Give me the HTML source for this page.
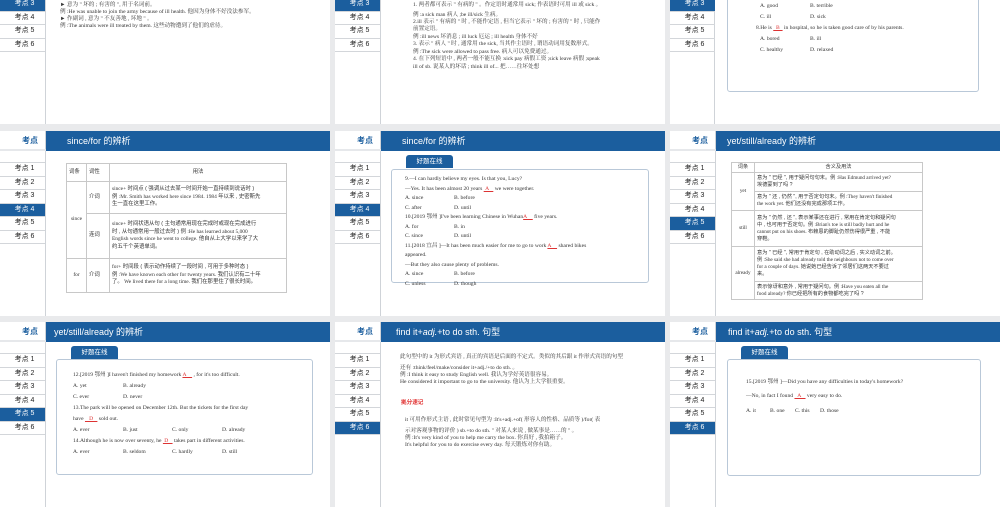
<!DOCTYPE html>
<html><head><meta charset="utf-8">
<style>
*{margin:0;padding:0;box-sizing:border-box}
body{width:1000px;height:503px;background:#e9eaec;position:relative;overflow:hidden;font-family:"Liberation Serif","Noto Serif CJK SC",serif;color:#333}
.s{position:absolute;width:330px;height:185px;background:#fff;overflow:hidden}
.sb{position:absolute;left:0;top:0;width:46px;height:185px;border-right:1px solid #cfd3d8;background:#fff}
.kd{position:absolute;left:0;top:0;width:46px;height:20px;font:bold 8px "Liberation Sans","Noto Sans CJK SC",sans-serif;color:#1b5e9e;text-align:right;padding-right:8px;line-height:20px;border-bottom:2px solid #e6e8eb}
.bar{position:absolute;left:46px;top:0;width:284px;height:20px;background:#1b5e9e;color:#fff;font:9px "Liberation Sans","Noto Sans CJK SC",sans-serif;line-height:20px}
.it{position:absolute;left:0;width:45px;height:13.5px;border-top:1px solid #d3d6da;font:7px "Liberation Sans","Noto Sans CJK SC",sans-serif;color:#222;text-align:center;line-height:12.5px;padding-left:4px}
.it.on{background:#1b5e9e;color:#fff}
.t{position:absolute;font-size:5.6px;white-space:nowrap;line-height:7px}
.r{color:#d33}
.tab{position:absolute;left:71px;top:24px;width:47px;height:13px;background:#1b5e9e;color:#fff;border-radius:3px 3px 0 0;font:6.5px "Liberation Sans","Noto Sans CJK SC",sans-serif;text-align:center;line-height:13px}
.box{position:absolute;border:1px solid #b9c8d8;border-radius:3px;background:#fff}
table{position:absolute;border-collapse:collapse;font-size:5.4px;line-height:7.5px}
td{border:1px solid #c8c8c8;padding:0 2px;vertical-align:middle}
.cj{font-family:"Liberation Sans","Noto Sans CJK SC",sans-serif}
</style></head><body>

<!-- ROW 1 -->
<div class="s" style="left:0;top:-61px">
<div class="sb"></div><div class="kd">考点</div><div class="bar"></div>
<div class="it" style="top:31px">考点 1</div><div class="it" style="top:44.5px">考点 2</div><div class="it on" style="top:58px">考点 3</div><div class="it" style="top:71.5px">考点 4</div><div class="it" style="top:85px">考点 5</div><div class="it" style="top:98.5px">考点 6</div><div class="it" style="top:112px;height:1px"></div>
<div class="t" style="left:60px;top:63px">► 意为 " 坏的 ; 有害的 ", 用于名词前。</div>
<div class="t" style="left:60px;top:70px">例 :He was unable to join the army because of ill health. 他因为身体不好没法参军。</div>
<div class="t" style="left:60px;top:77px">► 作副词 , 意为 " 不友善地 , 坏地 " 。</div>
<div class="t" style="left:60px;top:84px">例 :The animals were ill treated by them. 这些动物遭到了他们的虐待。</div>
</div>

<div class="s" style="left:335px;top:-61px">
<div class="sb"></div><div class="kd">考点</div><div class="bar"></div>
<div class="it" style="top:31px">考点 1</div><div class="it" style="top:44.5px">考点 2</div><div class="it on" style="top:58px">考点 3</div><div class="it" style="top:71.5px">考点 4</div><div class="it" style="top:85px">考点 5</div><div class="it" style="top:98.5px">考点 6</div><div class="it" style="top:112px;height:1px"></div>
<div class="t" style="left:78px;top:63px">1. 两者都可表示 " 有病的 " 。作定语时通常用 sick; 作表语时可用 ill 或 sick 。</div>
<div class="t" style="left:78px;top:73px">例 :a sick man 病人 ;be ill/sick 生病。</div>
<div class="t" style="left:78px;top:80px">2.ill 表示 " 有病的 " 时 , 不能作定语 , 但当它表示 " 坏的 ; 有害的 " 时 , 只能作</div>
<div class="t" style="left:78px;top:87px">前置定语。</div>
<div class="t" style="left:78px;top:95px">例 :ill news 坏消息 ; ill luck 厄运 ; ill health 身体不好</div>
<div class="t" style="left:78px;top:102px">3. 表示 " 病人 " 时 , 通常用 the sick, 当其作主语时 , 谓语动词用复数形式。</div>
<div class="t" style="left:78px;top:110px">例 :The sick were allowed to pass free. 病人可以免费通过。</div>
<div class="t" style="left:78px;top:117px">4. 在下列短语中 , 两者一般不能互换 :sick pay 病假工资 ;sick leave 病假 ;speak</div>
<div class="t" style="left:78px;top:125px">ill of sb. 说某人的坏话 ; think ill of... 把……往坏处想</div>
</div>

<div class="s" style="left:670px;top:-61px">
<div class="sb" style="left:-5px;width:50px"></div><div class="kd">考点</div><div class="bar"></div>
<div class="it" style="top:31px">考点 1</div><div class="it" style="top:44.5px">考点 2</div><div class="it on" style="top:58px">考点 3</div><div class="it" style="top:71.5px">考点 4</div><div class="it" style="top:85px">考点 5</div><div class="it" style="top:98.5px">考点 6</div><div class="it" style="top:112px;height:1px"></div>
<div class="box" style="left:57px;top:30px;width:252px;height:123px"></div>
<div class="t" style="left:90px;top:64px">A. good</div><div class="t" style="left:140px;top:64px">B. terrible</div>
<div class="t" style="left:90px;top:75px">C. ill</div><div class="t" style="left:140px;top:75px">D. sick</div>
<div class="t" style="left:86px;top:86px">8.He is <span class="r" style="text-decoration:underline">&nbsp;&nbsp;B&nbsp;&nbsp;</span> in hospital, so he is taken good care of by his parents.</div>
<div class="t" style="left:90px;top:97px">A. bored</div><div class="t" style="left:140px;top:97px">B. ill</div>
<div class="t" style="left:90px;top:108px">C. healthy</div><div class="t" style="left:140px;top:108px">D. relaxed</div>
</div>

<!-- ROW 2 -->
<div class="s" style="left:0;top:131px">
<div class="sb"></div><div class="kd">考点</div><div class="bar" style="padding-left:21px">since/for 的辨析</div>
<div class="it" style="top:31px">考点 1</div><div class="it" style="top:44.5px">考点 2</div><div class="it" style="top:58px">考点 3</div><div class="it on" style="top:71.5px">考点 4</div><div class="it" style="top:85px">考点 5</div><div class="it" style="top:98.5px">考点 6</div><div class="it" style="top:112px;height:1px"></div>
<table style="left:66px;top:32px;width:221px">
<tr style="height:18px" class="cj"><td style="width:20px">词条</td><td style="width:23px">词性</td><td style="text-align:center">用法</td></tr>
<tr style="height:32px"><td rowspan="2" style="text-align:center">since</td><td class="cj">介词</td><td>since+ <span class="cj">时间点 ( 强调从过去某一时间开始一直持续到说话时 )<br>例</span> :Mr. Smith has worked here since 1984. 1984 <span class="cj">年以来 , 史密斯先<br>生一直在这里工作。</span></td></tr>
<tr style="height:45px"><td class="cj">连词</td><td>since+ <span class="cj">时间状语从句 ( 主句通常用现在完成时或现在完成进行<br>时 , 从句通常用一般过去时 ) 例</span> :He has learned about 5,000<br>English words since he went to college. <span class="cj">他自从上大学以来学了大<br>约五千个英语单词。</span></td></tr>
<tr style="height:34px"><td style="text-align:center">for</td><td class="cj">介词</td><td>for+ <span class="cj">时间段 ( 表示动作持续了一段时间 , 可用于多种时态 )<br>例</span> :We have known each other for twenty years. <span class="cj">我们认识有二十年<br>了。</span> We lived there for a long time. <span class="cj">我们在那里住了很长时间。</span></td></tr>
</table>
</div>

<div class="s" style="left:335px;top:131px">
<div class="sb"></div><div class="kd">考点</div><div class="bar" style="padding-left:21px">since/for 的辨析</div>
<div class="it" style="top:31px">考点 1</div><div class="it" style="top:44.5px">考点 2</div><div class="it" style="top:58px">考点 3</div><div class="it on" style="top:71.5px">考点 4</div><div class="it" style="top:85px">考点 5</div><div class="it" style="top:98.5px">考点 6</div><div class="it" style="top:112px;height:1px"></div>
<div class="tab">好题在线</div>
<div class="box" style="left:56px;top:38px;width:258px;height:114px"></div>
<div class="t" style="left:70px;top:45px">9.—I can hardly believe my eyes. Is that you, Lucy?</div>
<div class="t" style="left:70px;top:54.5px">—Yes. It has been almost 20 years <span class="r" style="text-decoration:underline">&nbsp;A&nbsp;&nbsp;&nbsp;</span> we were together.</div>
<div class="t" style="left:70px;top:64px">A. since</div><div class="t" style="left:119px;top:64px">B. before</div>
<div class="t" style="left:70px;top:73.5px">C. after</div><div class="t" style="left:119px;top:73.5px">D. until</div>
<div class="t" style="left:70px;top:83px">10.[2019 鄂州 ]I've been learning Chinese in Wuhan<span class="r" style="text-decoration:underline">A&nbsp;&nbsp;&nbsp;&nbsp;</span> five years.</div>
<div class="t" style="left:70px;top:92.5px">A. for</div><div class="t" style="left:119px;top:92.5px">B. in</div>
<div class="t" style="left:70px;top:102px">C. since</div><div class="t" style="left:119px;top:102px">D. until</div>
<div class="t" style="left:70px;top:111.5px">11.[2018 宜昌 ]—It has been much easier for me to go to work <span class="r" style="text-decoration:underline">A&nbsp;&nbsp;&nbsp;&nbsp;</span> shared bikes</div>
<div class="t" style="left:70px;top:121px">appeared.</div>
<div class="t" style="left:70px;top:130.5px">—But they also cause plenty of problems.</div>
<div class="t" style="left:70px;top:140px">A. since</div><div class="t" style="left:119px;top:140px">B. before</div>
<div class="t" style="left:70px;top:149.5px">C. unless</div><div class="t" style="left:119px;top:149.5px">D. though</div>
</div>

<div class="s" style="left:670px;top:131px">
<div class="sb"></div><div class="kd">考点</div><div class="bar" style="padding-left:11px">yet/still/already 的辨析</div>
<div class="it" style="top:31px">考点 1</div><div class="it" style="top:44.5px">考点 2</div><div class="it" style="top:58px">考点 3</div><div class="it" style="top:71.5px">考点 4</div><div class="it on" style="top:85px">考点 5</div><div class="it" style="top:98.5px">考点 6</div><div class="it" style="top:112px;height:1px"></div>
<table style="left:61px;top:31px;width:192px;font-size:5.2px;line-height:7px">
<tr style="height:10px" class="cj"><td style="width:23px;text-align:center">词条</td><td style="text-align:center">含义及用法</td></tr>
<tr style="height:19px"><td rowspan="2" style="text-align:center">yet</td><td><span class="cj">意为 " 已经 ", 用于疑问句句末。例</span> :Has Edmund arrived yet?<br><span class="cj">埃德蒙到了吗 ?</span></td></tr>
<tr style="height:19px"><td><span class="cj">意为 " 还 , 仍然 ", 用于否定句句末。例</span> :They haven't finished<br>the work yet. <span class="cj">他们还没有完成那项工作。</span></td></tr>
<tr style="height:36px"><td style="text-align:center">still</td><td><span class="cj">意为 " 仍然 , 还 ", 表示某事还在进行 , 常用在肯定句和疑问句<br>中 , 也可用于否定句。例</span> :Brian's toe is still badly hurt and he<br>cannot put on his shoes. <span class="cj">布赖恩的脚趾仍然伤得很严重 , 不能<br>穿鞋。</span></td></tr>
<tr style="height:35px"><td rowspan="2" style="text-align:center">already</td><td><span class="cj">意为 " 已经 ", 常用于肯定句 , 在助动词之后 , 实义动词之前。<br>例</span> :She said she had already told the neighbours not to come over<br>for a couple of days. <span class="cj">她说她已经告诉了邻居们这两天不要过<br>来。</span></td></tr>
<tr style="height:18px"><td><span class="cj">表示惊讶和意外 , 常用于疑问句。例</span> :Have you eaten all the<br>food already? <span class="cj">你已经把所有的食物都吃完了吗 ?</span></td></tr>
</table>
</div>

<!-- ROW 3 -->
<div class="s" style="left:0;top:322px">
<div class="sb"></div><div class="kd">考点</div><div class="bar" style="padding-left:8px">yet/still/already 的辨析</div>
<div class="it" style="top:31px">考点 1</div><div class="it" style="top:44.5px">考点 2</div><div class="it" style="top:58px">考点 3</div><div class="it" style="top:71.5px">考点 4</div><div class="it on" style="top:85px">考点 5</div><div class="it" style="top:98.5px">考点 6</div><div class="it" style="top:112px;height:1px"></div>
<div class="tab">好题在线</div>
<div class="box" style="left:56px;top:37px;width:257px;height:116px"></div>
<div class="t" style="left:73px;top:50px">12.[2019 鄂州 ]I haven't finished my homework <span class="r" style="text-decoration:underline">A&nbsp;&nbsp;&nbsp;&nbsp;</span> , for it's too difficult.</div>
<div class="t" style="left:73px;top:61px">A. yet</div><div class="t" style="left:123px;top:61px">B. already</div>
<div class="t" style="left:73px;top:72px">C. ever</div><div class="t" style="left:123px;top:72px">D. never</div>
<div class="t" style="left:73px;top:83px">13.The park will be opened on December 12th. But the tickets for the first day</div>
<div class="t" style="left:73px;top:94px">have <span class="r" style="text-decoration:underline">&nbsp;&nbsp;&nbsp;D&nbsp;&nbsp;&nbsp;</span> sold out.</div>
<div class="t" style="left:73px;top:105px">A. ever</div><div class="t" style="left:123px;top:105px">B. just</div><div class="t" style="left:172px;top:105px">C. only</div><div class="t" style="left:222px;top:105px">D. already</div>
<div class="t" style="left:73px;top:116px">14.Although he is now over seventy, he <span class="r" style="text-decoration:underline">&nbsp;D&nbsp;&nbsp;&nbsp;</span> takes part in different activities.</div>
<div class="t" style="left:73px;top:127px">A. ever</div><div class="t" style="left:123px;top:127px">B. seldom</div><div class="t" style="left:172px;top:127px">C. hardly</div><div class="t" style="left:222px;top:127px">D. still</div>
</div>

<div class="s" style="left:335px;top:322px">
<div class="sb"></div><div class="kd">考点</div><div class="bar" style="padding-left:15px">find it+<i>adj.</i>+to do sth. 句型</div>
<div class="it" style="top:31px">考点 1</div><div class="it" style="top:44.5px">考点 2</div><div class="it" style="top:58px">考点 3</div><div class="it" style="top:71.5px">考点 4</div><div class="it" style="top:85px">考点 5</div><div class="it on" style="top:98.5px">考点 6</div><div class="it" style="top:112px;height:1px"></div>
<div class="t" style="left:65px;top:32px">此句型中的 it 为形式宾语 , 真正的宾语是后面的不定式。类似的其后跟 it 作形式宾语的句型</div>
<div class="t" style="left:65px;top:43px">还有 :think/feel/make/consider it+adj./+to do sth. 。</div>
<div class="t" style="left:65px;top:50px">例 :I think it easy to study English well. 我认为学好英语很容易。</div>
<div class="t" style="left:65px;top:57px">He considered it important to go to the university. 他认为上大学很重要。</div>
<div class="t cj" style="left:66px;top:78px;color:#e03030;font-weight:bold">拠分速记</div>
<div class="t" style="left:70px;top:95px">it 可用作形式主语 , 此时常见句型为 :It's+adj.+of( 形容人的性格、品质等 )/for( 表</div>
<div class="t" style="left:70px;top:106px">示对客观事物的评价 ) sb.+to do sth. " 对某人来说 , 做某事是……的 " 。</div>
<div class="t" style="left:70px;top:113px">例 :It's very kind of you to help me carry the box. 你真好 , 我拍箱子。</div>
<div class="t" style="left:70px;top:120px">It's helpful for you to do exercise every day. 每天锻炼对你有助。</div>
</div>

<div class="s" style="left:670px;top:322px">
<div class="sb"></div><div class="kd">考点</div><div class="bar" style="padding-left:12px">find it+<i>adj.</i>+to do sth. 句型</div>
<div class="it" style="top:31px">考点 1</div><div class="it" style="top:44.5px">考点 2</div><div class="it" style="top:58px">考点 3</div><div class="it" style="top:71.5px">考点 4</div><div class="it" style="top:85px">考点 5</div><div class="it on" style="top:98.5px">考点 6</div><div class="it" style="top:112px;height:1px"></div>
<div class="tab">好题在线</div>
<div class="box" style="left:57px;top:37px;width:254px;height:117px"></div>
<div class="t" style="left:76px;top:57px">15.[2019 鄂州 ]—Did you have any difficulties in today's homework?</div>
<div class="t" style="left:76px;top:71px">—No, in fact I found <span class="r" style="text-decoration:underline">&nbsp;&nbsp;A&nbsp;&nbsp;&nbsp;</span> very easy to do.</div>
<div class="t" style="left:76px;top:86px">A. it</div><div class="t" style="left:100px;top:86px">B. one</div><div class="t" style="left:125px;top:86px">C. this</div><div class="t" style="left:150px;top:86px">D. those</div>
</div>

</body></html>
